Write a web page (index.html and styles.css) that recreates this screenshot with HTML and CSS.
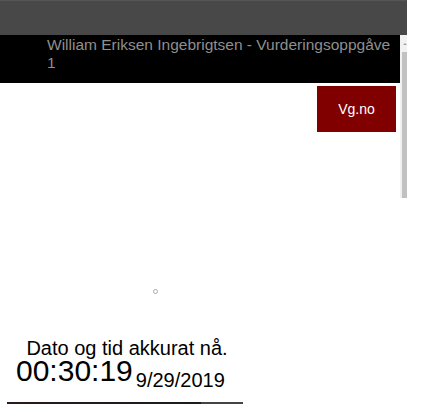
FILE: index.html
```html
<!DOCTYPE html>
<html lang="no">
<head>
    <meta charset="UTF-8">
    <title>Vurderingsoppgåve 1</title>
    <link rel="stylesheet" href="styles.css">
</head>
<body>
    <div class="topbar"></div>

    <div class="frame">
        <div class="page">
            <header>
                <h1>William Eriksen Ingebrigtsen - Vurderingsoppgåve 1</h1>
            </header>

            <div class="links">
                <a class="vg-button" href="#">Vg.no</a>
            </div>

            <div class="loader"><span class="dot"></span></div>

            <div class="clock-box">
                <p class="clock-title">Dato og tid akkurat nå.</p>
                <p class="clock"><span class="time">00:30:19</span><span class="date">9/29/2019</span></p>
            </div>
        </div>

        <div class="scrollbar">
            <span class="arrow"></span>
            <span class="thumb"></span>
        </div>
    </div>
</body>
</html>
```

FILE: styles.css
```css
body {
    margin: 0;
    padding: 0;
    font-family: "Liberation Sans", Arial, sans-serif;
    background: #fff;
    width: 431px;
}

.topbar {
    width: 407px;
    height: 35px;
    background: #484848;
    border-top: 1px solid #555;
    box-sizing: border-box;
}

.frame {
    display: flex;
    align-items: flex-start;
    width: 407px;
}

.page {
    width: 400px;
}

header {
    background: #000;
    height: 48px;
    padding: 0 8px 0 47px;
    box-sizing: border-box;
}

h1 {
    margin: 0;
    font-size: 15.5px;
    font-weight: normal;
    line-height: 18px;
    color: #8f8f8f;
    padding-top: 1px;
}

.links {
    display: flex;
    justify-content: flex-end;
    padding: 3px 4px 0 0;
}

.vg-button {
    display: flex;
    align-items: center;
    justify-content: center;
    width: 79px;
    height: 46px;
    background: #800000;
    color: #fff;
    font-size: 14px;
    text-decoration: none;
}

.loader {
    padding: 157px 0 0 153px;
    height: 6px;
}

.dot {
    display: block;
    width: 5px;
    height: 5px;
    border: 1px solid #a9a9b4;
    border-radius: 50%;
    box-sizing: border-box;
}

.clock-box {
    width: 236px;
    margin: 43px 0 0 7px;
    text-align: center;
    border-bottom: 2px solid #444;
    border-image: linear-gradient(to right, #2b1a1a, #1c1c1c 82%, #444 82%) 1;
    padding-bottom: 14px;
}

.clock-title {
    margin: 0;
    padding-left: 4px;
    font-size: 20px;
    line-height: 21px;
}

.clock {
    margin: 0;
    line-height: 24px;
    text-align: left;
    padding-left: 9px;
}

.time {
    font-size: 30px;
}

.date {
    font-size: 20px;
    position: relative;
    top: 6px;
    margin-left: 3px;
}

.scrollbar {
    position: relative;
    width: 7px;
    height: 163px;
    background: #f1f1f1;
}

.arrow {
    position: absolute;
    top: 8px;
    left: 3px;
    width: 0;
    height: 0;
    border-left: 2px solid transparent;
    border-right: 2px solid transparent;
    border-bottom: 2px solid #a3a3a3;
}

.thumb {
    position: absolute;
    top: 17px;
    left: 2px;
    width: 5px;
    height: 146px;
    background: #c1c1c1;
}
```
